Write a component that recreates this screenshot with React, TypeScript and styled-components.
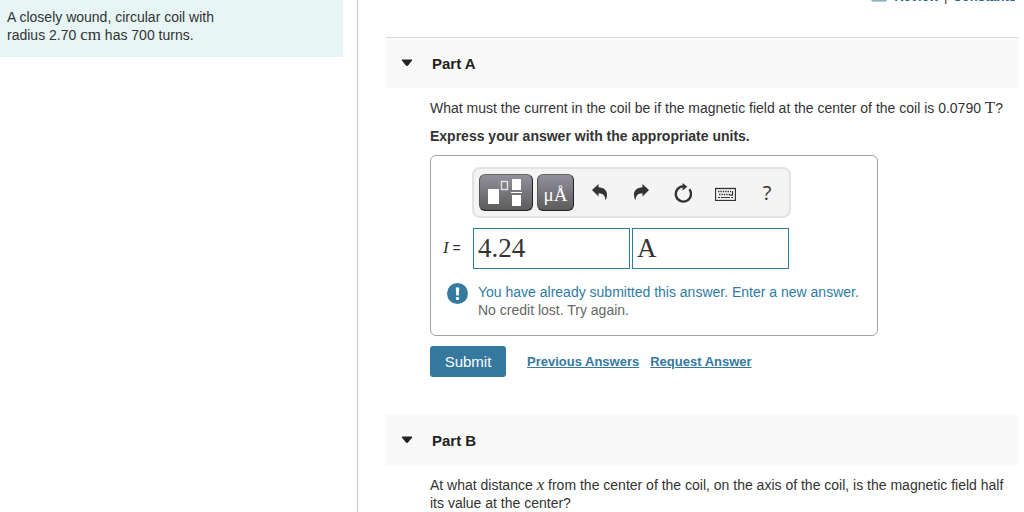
import React from "react";
import styled, { createGlobalStyle } from "styled-components";

const Global = createGlobalStyle`
  * { box-sizing: border-box; }
  html, body { margin: 0; background: #fff; }
  body {
    font-family: "Liberation Sans", Arial, sans-serif;
    font-size: 14px;
    line-height: 18px;
    color: #333;
    overflow: hidden;
  }
  p { margin: 0; }
`;

const Page = styled.div`
  display: grid;
  grid-template-columns: minmax(0, 358fr) minmax(0, 666fr);
  height: 100vh;
  overflow: hidden;
`;

const Sidebar = styled.aside`
  border-right: 1px solid #c3c8de;
  padding-right: 14px;
`;

const Statement = styled.div`
  background: #e7f5f5;
  padding: 8px 104px 13px 7px;
`;

const MathText = styled.span<{ $italic?: boolean }>`
  font-family: "Liberation Serif", "Times New Roman", serif;
  font-size: 17px;
  line-height: 16px;
  font-style: ${(p) => (p.$italic ? "italic" : "normal")};
`;

const Content = styled.main`
  padding: 0 5px 0 28px;
  overflow: hidden;
`;

const TopLinks = styled.nav`
  display: flex;
  justify-content: flex-end;
  align-items: center;
  gap: 5px;
  height: 18px;
  margin: -12px 3px 31px 0;
  font-size: 13px;
`;

const TopLink = styled.a`
  display: inline-flex;
  align-items: center;
  gap: 7px;
  color: #1f6489;
  font-weight: bold;
  text-decoration: none;
`;

const PartHeader = styled.header<{ $ruled?: boolean }>`
  display: flex;
  align-items: center;
  gap: 19px;
  height: ${(p) => (p.$ruled ? "51px" : "50px")};
  padding-left: 15px;
  background: #f9f9f9;
  border-top: ${(p) => (p.$ruled ? "1px solid #dcdcdc" : "none")};
`;

const Toggle = styled.button`
  display: flex;
  padding: 0;
  border: 0;
  background: none;
  color: #222;
`;

const PartTitle = styled.h2`
  margin: 0;
  padding-top: 1px;
  font-size: 15px;
  line-height: 18px;
  color: #222;
`;

const PartBody = styled.div`
  padding: 11px 0 38px 44px;
`;

const Instruction = styled.p`
  margin: 10px 0;
  font-weight: bold;
`;

const AnswerBox = styled.form`
  max-width: 448px;
  padding: 11px 16px 16px 12px;
  border: 1px solid #a3a3a3;
  border-radius: 6px;
`;

const Toolbar = styled.div`
  display: flex;
  align-items: center;
  width: 319px;
  height: 51px;
  margin-left: 29px;
  padding-left: 5px;
  background: #f4f4f4;
  border: 2px solid #e2e2e2;
  border-radius: 8px;
`;

const PaletteButton = styled.button<{ $wide?: boolean }>`
  display: flex;
  align-items: center;
  justify-content: center;
  width: ${(p) => (p.$wide ? "54px" : "37px")};
  height: 37px;
  margin-right: 4px;
  padding: ${(p) => (p.$wide ? "0 3px 0 0" : "4px 0 0")};
  border: 1px solid #222;
  border-top-color: #666;
  border-left-color: #555;
  border-radius: 6px;
  background: linear-gradient(#92909b, #5c5c5c);
  color: #fff;
  font-family: "Liberation Serif", serif;
  font-size: 19px;
  line-height: 24px;
`;

const IconButton = styled.button`
  display: flex;
  align-items: center;
  justify-content: center;
  width: 42px;
  height: 36px;
  padding: 0;
  border: 0;
  background: none;
  color: #333;
  font-family: "Open Sans", sans-serif;
  font-size: 20px;
  line-height: 24px;
`;

const AnswerRow = styled.div`
  display: flex;
  align-items: center;
  gap: 2px;
  margin-top: 10px;
`;

const AnswerLabel = styled.label`
  width: 28px;
  padding-bottom: 2px;
  white-space: nowrap;
`;

const AnswerInput = styled.input`
  width: 157px;
  height: 41px;
  padding: 0 4px;
  border: 1px solid #2f7ba3;
  border-radius: 0;
  background: #fff;
  color: #333;
  font-family: "Liberation Serif", "Times New Roman", serif;
  font-size: 27px;
`;

const Feedback = styled.div`
  display: flex;
  gap: 10px;
  margin: 14px 0 0 4px;
  color: #666;
`;

const FeedbackTitle = styled.p`
  color: #2f7ba3;
`;

const Actions = styled.div`
  display: flex;
  align-items: center;
  margin-top: 10px;
`;

const Submit = styled.button`
  width: 76px;
  height: 31px;
  margin-right: 21px;
  padding: 0;
  border: 0;
  border-radius: 3px;
  background: #35799f;
  color: #fff;
  font-family: inherit;
  font-size: 15px;
`;

const ActionLink = styled.a`
  margin-right: 11px;
  color: #35799f;
  font-size: 13px;
  font-weight: bold;
`;

const Triangle = () => (
  <svg width="12" height="8" viewBox="0 0 12 8">
    <path d="M1 1H11L6.7 6.3Q6 7 5.3 6.3Z" fill="currentColor" stroke="currentColor" strokeLinejoin="round" />
  </svg>
);

const TemplatesIcon = () => (
  <svg width="34" height="30" viewBox="0 0 34 30">
    <rect x="0" y="11" width="11" height="15" fill="#fff" />
    <rect x="13.5" y="3.5" width="6" height="8" fill="none" stroke="#e4e4e4" strokeWidth="1.4" />
    <rect x="24" y="1" width="9" height="11" fill="#fff" />
    <rect x="23" y="14" width="11" height="1" fill="#fff" />
    <rect x="24" y="17" width="9" height="11" fill="#fff" />
  </svg>
);

const ArrowShape = () => (
  <path
    d="M0 6L6.5 0V3.2C12 3.4 15 6.5 15 10.5C15 13 14.4 15 13.4 16.5C13.4 12 11.5 9.2 6.5 9.2V12.4Z"
    fill="currentColor"
  />
);

const UndoIcon = () => (
  <svg width="15" height="17" viewBox="0 0 15 17"><ArrowShape /></svg>
);

const RedoIcon = () => (
  <svg width="15" height="17" viewBox="0 0 15 17"><g transform="translate(15 0) scale(-1 1)"><ArrowShape /></g></svg>
);

const ResetIcon = () => (
  <svg width="18" height="20" viewBox="0 0 18 20">
    <path d="M15.3 6.2A7.6 7.6 0 1 1 9 3.4" fill="none" stroke="currentColor" strokeWidth="2.4" />
    <path d="M8.6 0L13.3 3.8L8.6 7.6Z" fill="currentColor" />
  </svg>
);

const KeyboardIcon = () => (
  <svg width="21" height="17" viewBox="0 -4 21 17">
    <rect x=".5" y=".5" width="20" height="12" fill="none" stroke="currentColor" strokeWidth="1.3" />
    <path d="M3 3.5H16M4 6.5H15" stroke="currentColor" strokeWidth="1.4" strokeDasharray="1.4 1" />
    <path d="M3 9.5H5M6 9.5H15M16 9.5H18M17.5 3V7.2H15" fill="none" stroke="currentColor" strokeWidth="1.2" />
  </svg>
);

const AlertIcon = () => (
  <svg width="21" height="22" viewBox="0 0 21 22">
    <circle cx="10.5" cy="10.5" r="10.5" fill="#35799f" />
    <path d="M8.8 4.5H12.2L11.7 12.5H9.3Z" fill="#fff" />
    <rect x="9" y="14" width="3" height="3" rx="1" fill="#fff" />
  </svg>
);

const BookIcon = () => (
  <svg width="16" height="10" viewBox="0 0 16 10">
    <path d="M1 1H15V9H1Z" fill="#a9c8d6" stroke="#6f9fb5" />
  </svg>
);

export default function App() {
  return (
    <>
      <Global />
      <Page>
        <Sidebar>
          <Statement>
            A closely wound, circular coil with radius 2.70 <MathText>cm</MathText> has 700 turns.
          </Statement>
        </Sidebar>
        <Content>
          <TopLinks>
            <TopLink href="#review"><BookIcon />Review</TopLink>
            <span>|</span>
            <TopLink href="#constants">Constants</TopLink>
          </TopLinks>
          <section>
            <PartHeader $ruled>
              <Toggle type="button" aria-label="Collapse Part A"><Triangle /></Toggle>
              <PartTitle>Part A</PartTitle>
            </PartHeader>
            <PartBody>
              <p>
                What must the current in the coil be if the magnetic field at the center of the coil is 0.0790{" "}
                <MathText>T</MathText>?
              </p>
              <Instruction>Express your answer with the appropriate units.</Instruction>
              <AnswerBox onSubmit={(e) => e.preventDefault()} id="answer">
                <Toolbar role="toolbar">
                  <PaletteButton $wide type="button" aria-label="Templates"><TemplatesIcon /></PaletteButton>
                  <PaletteButton type="button">μÅ</PaletteButton>
                  <IconButton type="button" aria-label="Undo"><UndoIcon /></IconButton>
                  <IconButton type="button" aria-label="Redo"><RedoIcon /></IconButton>
                  <IconButton type="button" aria-label="Reset"><ResetIcon /></IconButton>
                  <IconButton type="button" aria-label="Keyboard"><KeyboardIcon /></IconButton>
                  <IconButton type="button">?</IconButton>
                </Toolbar>
                <AnswerRow>
                  <AnswerLabel htmlFor="value"><MathText $italic>I</MathText> =</AnswerLabel>
                  <AnswerInput id="value" defaultValue="4.24" />
                  <AnswerInput aria-label="Units" defaultValue="A" />
                </AnswerRow>
                <Feedback>
                  <AlertIcon />
                  <div>
                    <FeedbackTitle>You have already submitted this answer. Enter a new answer.</FeedbackTitle>
                    <p>No credit lost. Try again.</p>
                  </div>
                </Feedback>
              </AnswerBox>
              <Actions>
                <Submit type="submit" form="answer">Submit</Submit>
                <ActionLink href="#previous">Previous Answers</ActionLink>
                <ActionLink href="#request">Request Answer</ActionLink>
              </Actions>
            </PartBody>
          </section>
          <section>
            <PartHeader>
              <Toggle type="button" aria-label="Collapse Part B"><Triangle /></Toggle>
              <PartTitle>Part B</PartTitle>
            </PartHeader>
            <PartBody>
              At what distance <MathText $italic>x</MathText> from the center of the coil, on the axis of the coil, is
              the magnetic field half its value at the center?
            </PartBody>
          </section>
        </Content>
      </Page>
    </>
  );
}
